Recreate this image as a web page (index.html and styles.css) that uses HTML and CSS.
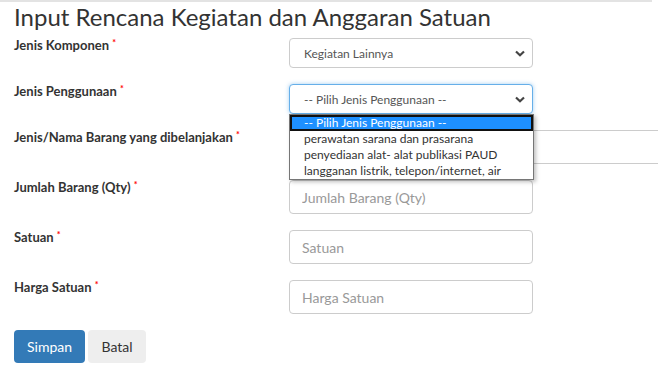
FILE: index.html
```html
<!DOCTYPE html>
<html lang="id">
<head>
    <meta charset="UTF-8">
    <meta name="viewport" content="width=device-width, initial-scale=1.0">
    <title>Input Rencana Kegiatan dan Anggaran Satuan</title>
    <link rel="stylesheet" href="styles.css">
</head>
<body>
    <div class="panel">
        <h1>Input Rencana Kegiatan dan Anggaran Satuan</h1>
        <form class="rka-form">
            <div class="form-row">
                <label class="form-label">Jenis Komponen <span class="req">*</span></label>
                <div class="select-box">
                    <span>Kegiatan Lainnya</span>
                    <svg class="chevron" width="10" height="7" viewBox="0 0 10 7"><path d="M1 1.5 L5 5.2 L9 1.5" fill="none" stroke="#444" stroke-width="2.2"/></svg>
                </div>
            </div>

            <div class="form-row">
                <label class="form-label">Jenis Penggunaan <span class="req">*</span></label>
                <div class="select-wrap">
                    <div class="select-box focused">
                        <span>-- Pilih Jenis Penggunaan --</span>
                        <svg class="chevron" width="10" height="7" viewBox="0 0 10 7"><path d="M1 1.5 L5 5.2 L9 1.5" fill="none" stroke="#444" stroke-width="2.2"/></svg>
                    </div>
                    <ul class="dropdown">
                        <li class="selected">-- Pilih Jenis Penggunaan --</li>
                        <li>perawatan sarana dan prasarana</li>
                        <li>penyediaan alat- alat publikasi PAUD</li>
                        <li>langganan listrik, telepon/internet, air</li>
                    </ul>
                </div>
            </div>

            <div class="form-row">
                <label class="form-label">Jenis/Nama Barang yang dibelanjakan <span class="req">*</span></label>
                <input type="text" class="form-input wide">
            </div>

            <div class="form-row">
                <label class="form-label">Jumlah Barang (Qty) <span class="req">*</span></label>
                <input type="text" class="form-input" placeholder="Jumlah Barang (Qty)">
            </div>

            <div class="form-row">
                <label class="form-label">Satuan <span class="req">*</span></label>
                <input type="text" class="form-input" placeholder="Satuan">
            </div>

            <div class="form-row">
                <label class="form-label">Harga Satuan <span class="req">*</span></label>
                <input type="text" class="form-input" placeholder="Harga Satuan">
            </div>

            <div class="actions">
                <button type="submit" class="btn btn-primary">Simpan</button>
                <button type="button" class="btn btn-default">Batal</button>
            </div>
        </form>
    </div>
</body>
</html>
```

FILE: styles.css
```css
* {
    margin: 0;
    padding: 0;
    box-sizing: border-box;
}

body {
    background: #fff;
    color: #333;
    font-family: 'Lato', 'Open Sans', sans-serif;
    font-size: 14px;
    overflow: hidden;
}

.panel {
    border-top: 2px solid #e3e3e3;
    margin-right: 6px;
    padding: 0 0 0 14px;
}

h1 {
    font-size: 24px;
    font-weight: 400;
    line-height: 30px;
    height: 36px;
    color: #333;
    margin-right: -6px;
}

.rka-form {
    display: flex;
    flex-direction: column;
}

.form-row {
    display: grid;
    grid-template-columns: 275px 244px;
    align-items: start;
    margin-bottom: 16px;
}

.form-label {
    font-size: 13px;
    font-weight: 700;
    line-height: 16px;
    margin-top: -3px;
    color: #333;
}

.req {
    color: #f00;
    font-size: 9px;
    vertical-align: 4px;
}

.select-wrap {
    position: relative;
}

.select-box {
    height: 30px;
    border: 1px solid #ccc;
    border-radius: 4px;
    display: flex;
    align-items: center;
    justify-content: space-between;
    padding: 0 7px 0 14px;
    font-size: 12px;
    color: #555;
    background: #fff;
}

.select-box.focused {
    border-color: #66afe9;
    box-shadow: 0 0 4px rgba(102, 175, 233, 0.6);
}

.chevron {
    display: block;
}

.dropdown {
    position: absolute;
    top: 30px;
    left: 0;
    width: 245px;
    list-style: none;
    background: #fff;
    border: 1px solid #767676;
    box-shadow: 2px 2px 4px rgba(0, 0, 0, 0.25);
    z-index: 5;
}

.dropdown li {
    font-size: 12px;
    line-height: 16px;
    height: 16px;
    padding-left: 14px;
    color: #333;
    white-space: nowrap;
}

.dropdown li.selected {
    background: #1e90ff;
    color: #fff;
    outline: 2px solid #111;
    outline-offset: -2px;
}

.form-input {
    height: 34px;
    border: 1px solid #ccc;
    border-radius: 4px;
    padding: 0 12px;
    font-family: inherit;
    font-size: 14px;
    color: #555;
    background: #fff;
}

.form-input.wide {
    width: 400px;
}

.form-input::placeholder {
    color: #999;
}

.actions {
    display: flex;
    gap: 3px;
}

.btn {
    height: 33px;
    border: none;
    border-radius: 4px;
    font-family: inherit;
    font-size: 14px;
    padding: 0 13px;
}

.btn-primary {
    background: #337ab7;
    color: #fff;
    width: 71px;
}

.btn-default {
    background: #eee;
    color: #333;
    width: 58px;
}
```
